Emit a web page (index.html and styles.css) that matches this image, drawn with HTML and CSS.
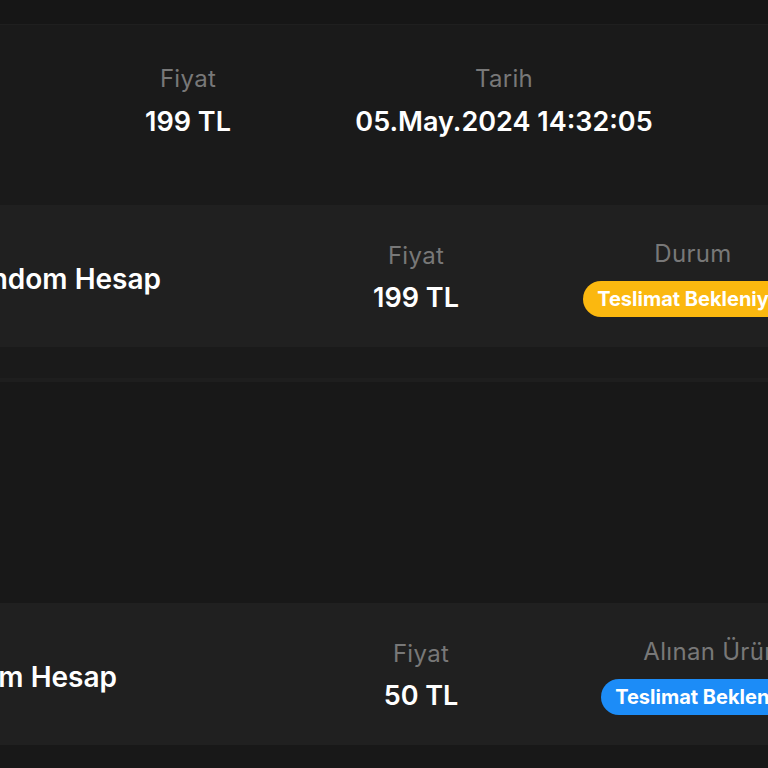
FILE: index.html
```html
<!DOCTYPE html>
<html lang="tr">
<head>
    <meta charset="UTF-8">
    <title>Siparişlerim</title>
    <link rel="stylesheet" href="styles.css">
</head>
<body>
    <div class="topbar"></div>
    <div class="order-panel">
        <div class="info-row">
            <div class="info price-top">
                <span class="label">Fiyat</span>
                <span class="value">199 TL</span>
            </div>
            <div class="info date-top">
                <span class="label">Tarih</span>
                <span class="value">05.May.2024 14:32:05</span>
            </div>
        </div>
    </div>
    <div class="card card-one">
        <div class="title"><span>Random Hesap</span></div>
        <div class="info price">
            <span class="label">Fiyat</span>
            <span class="value">199 TL</span>
        </div>
        <div class="info status">
            <span class="label">Durum</span>
            <span class="badge yellow">Teslimat Bekleniyor</span>
        </div>
    </div>
    <div class="spacer"></div>
    <div class="section"></div>
    <div class="card card-two">
        <div class="title"><span>Random Hesap</span></div>
        <div class="info price">
            <span class="label">Fiyat</span>
            <span class="value">50 TL</span>
        </div>
        <div class="info status">
            <span class="label">Alınan Ürün</span>
            <span class="badge blue">Teslimat Bekleniyor</span>
        </div>
    </div>
    <div class="bottom"></div>
</body>
</html>
```

FILE: styles.css
```css
html, body {
    margin: 0;
    padding: 0;
    background: #181818;
    overflow: hidden;
    font-family: Inter, "Noto Sans", sans-serif;
    color: #fff;
}
.topbar {
    height: 24px;
    background: #161616;
    border-bottom: 1px solid #1f1f1f;
}
.order-panel {
    height: 180px;
    background: #1a1a1a;
    box-sizing: border-box;
    padding-top: 41px;
}
.info-row {
    display: flex;
    padding-left: 108px;
    gap: 56px;
}
.info {
    display: flex;
    flex-direction: column;
    align-items: center;
    white-space: nowrap;
    flex-shrink: 0;
}
.label {
    font-size: 24px;
    color: #787878;
    line-height: 26px;
    letter-spacing: 0.3px;
}
.value {
    font-size: 27px;
    font-weight: 600;
    line-height: 34px;
    margin-top: 12px;
}
.order-panel .value { margin-top: 13px; }
.price-top { width: 160px; }
.date-top { width: 360px; }
.card {
    height: 142px;
    box-sizing: border-box;
    padding-top: 6px;
    background: #202020;
    display: flex;
    align-items: center;
    white-space: nowrap;
}
.title {
    display: flex;
    justify-content: flex-end;
    flex-shrink: 0;
    font-size: 28px;
    font-weight: 600;
    line-height: 36px;
}
.card-one .title { width: 161px; }
.card-one .price {
    width: 100px;
    margin-left: 205px;
}
.card-one .status {
    margin-left: 116px;
    width: 222px;
}
.card-two .title { width: 117px; }
.card-two .price {
    width: 100px;
    margin-left: 254px;
}
.card-two .status {
    margin-left: 129px;
    width: 222px;
}
.badge {
    margin-top: 14px;
    height: 36px;
    line-height: 36px;
    padding: 0 14px;
    border-radius: 18px;
    font-size: 20px;
    font-weight: 700;
}
.yellow { background: #fbb80f; }
.blue { background: #1c8cf7; }
.spacer {
    height: 31px;
    background: #1a1a1a;
    border-bottom: 4px solid #1e1e1e;
}
.section {
    height: 221px;
    background: #181818;
}
.bottom {
    height: 30px;
    background: #181818;
}
```
